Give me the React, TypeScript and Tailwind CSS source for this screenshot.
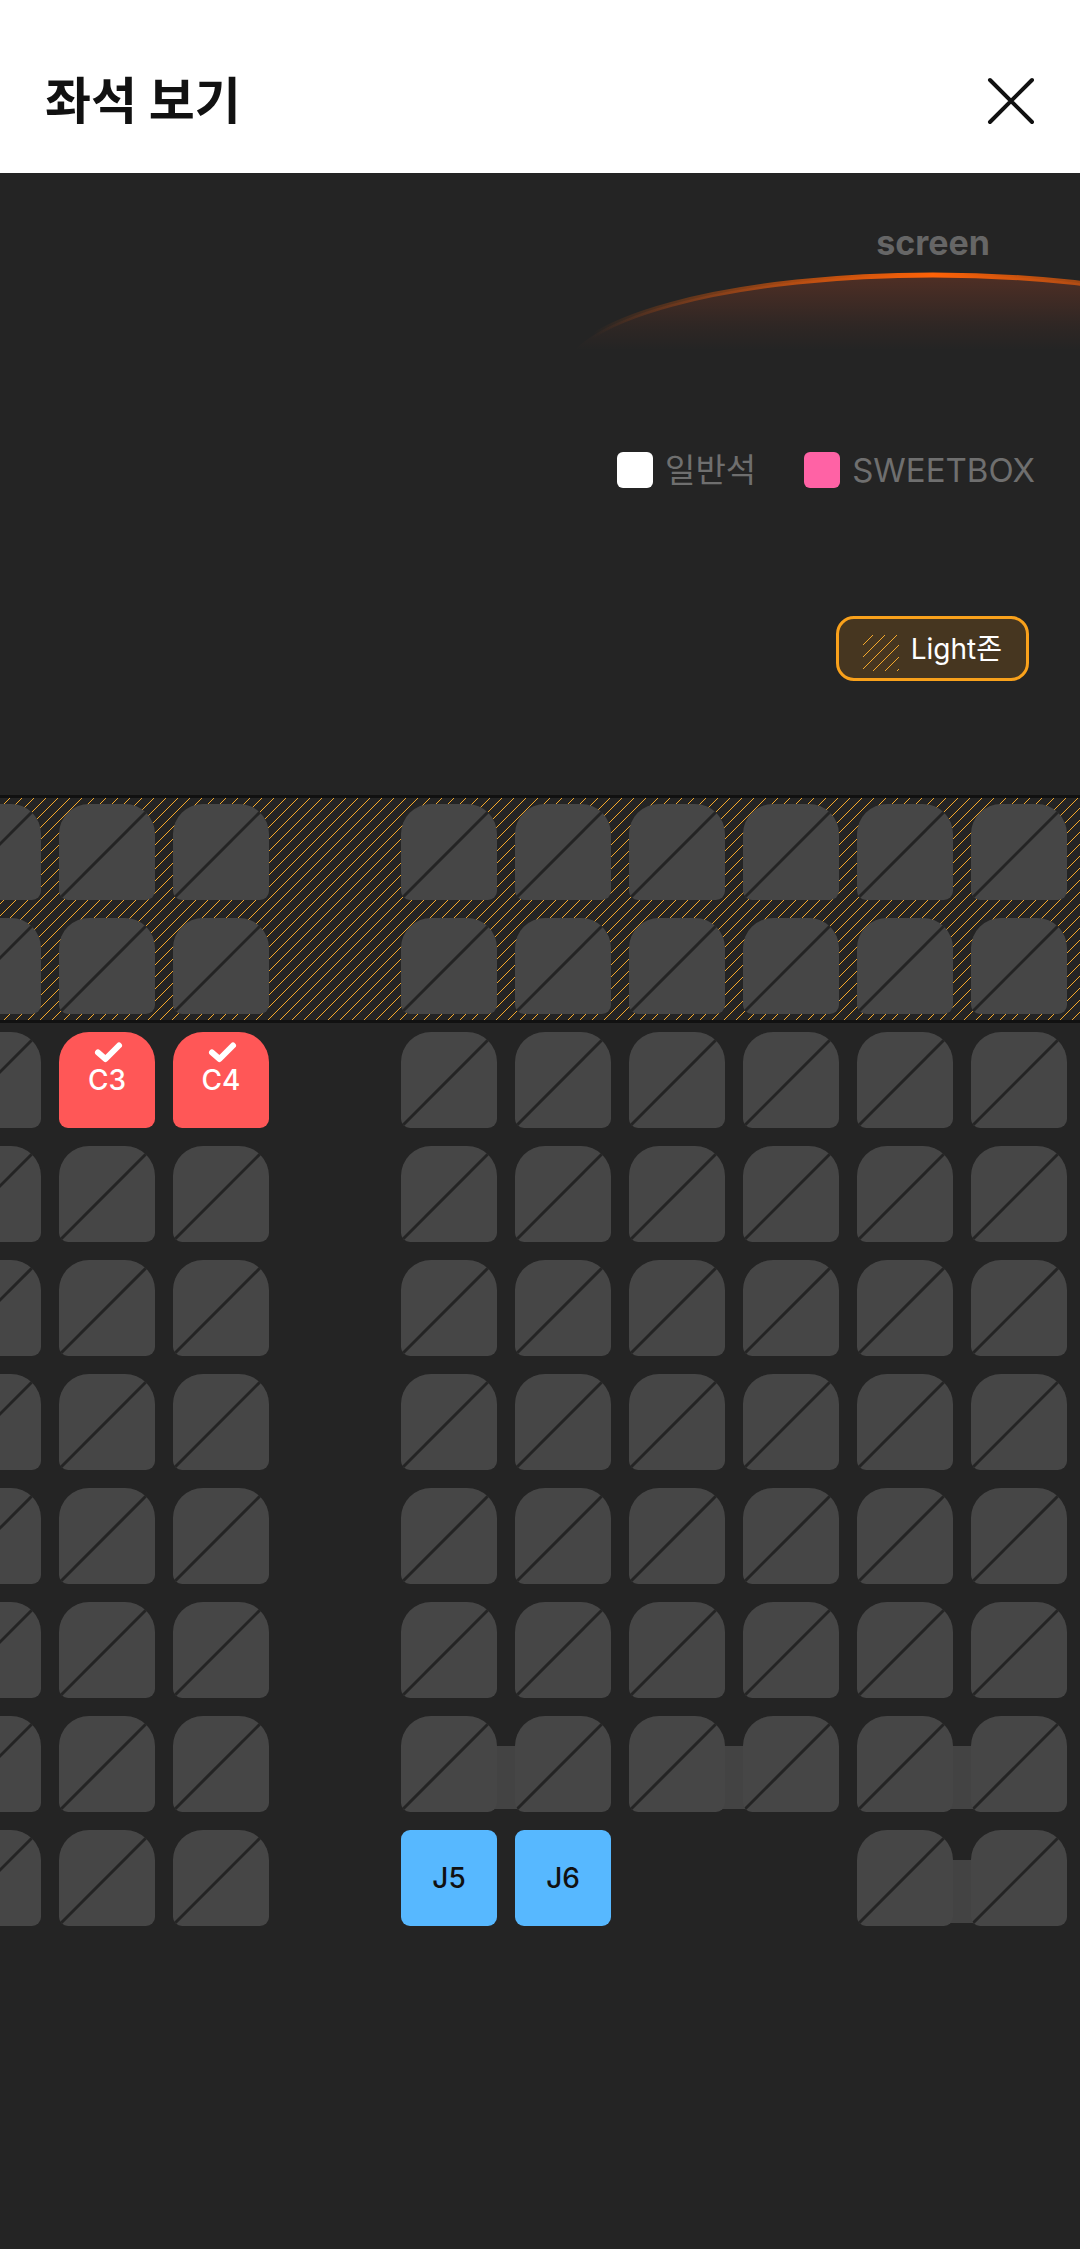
import { useState } from 'react';
import clsx from 'clsx';

type SeatType = 'sold' | 'picked' | 'open';

const ROWS = ['A', 'B', 'C', 'D', 'E', 'F', 'G', 'H', 'I', 'J'];
const LIGHT_ROWS = ROWS.slice(0, 2);
const OTHER_ROWS = ROWS.slice(2);

// 0 is the aisle
const COLUMNS = [2, 3, 4, 0, 5, 6, 7, 8, 9, 10];

const OPEN_SEATS = ['J5', 'J6'];
const MISSING_SEATS = ['J7', 'J8'];

// first seat of every sold pair
const SOLD_PAIRS = ['I5', 'I7', 'I9', 'J9'];

const LEGEND = [
    { label: '일반석', color: 'bg-white' },
    { label: 'SWEETBOX', color: 'bg-[#ff62a5]' },
];

function Hatch({ id, className }: { id: string; className?: string }) {
    return (
        <svg className={className} aria-hidden="true">
            <defs>
                <pattern id={id} width="12" height="12" patternUnits="userSpaceOnUse">
                    {Array.from({ length: 12 }, (_, y) => (
                        <rect key={y} x={(21 - y) % 12} y={y} width="1" height="1" fill="#f5a92c" />
                    ))}
                </pattern>
            </defs>
            <rect width="100%" height="100%" fill={`url(#${id})`} />
        </svg>
    );
}

function ScreenCurve() {
    return (
        <svg width="740" height="100" viewBox="0 0 740 100" className="block" aria-hidden="true">
            <defs>
                <linearGradient id="screen-line" x1="0" x2="740" y1="0" y2="0" gradientUnits="userSpaceOnUse">
                    <stop offset="0.04" stopColor="#ff6207" stopOpacity="0" />
                    <stop offset="0.5" stopColor="#ff6207" />
                    <stop offset="0.96" stopColor="#ff6207" stopOpacity="0" />
                </linearGradient>
                <linearGradient id="screen-glow" x1="0" x2="0" y1="14" y2="98" gradientUnits="userSpaceOnUse">
                    <stop offset="0" stopColor="#ff5a28" stopOpacity="0.2" />
                    <stop offset="0.6" stopColor="#ff5a28" stopOpacity="0.05" />
                    <stop offset="0.9" stopColor="#ff5a28" stopOpacity="0" />
                </linearGradient>
            </defs>
            <ellipse cx="370" cy="114" rx="370" ry="100" fill="url(#screen-glow)" />
            <ellipse cx="370" cy="114" rx="370" ry="100" fill="none" stroke="url(#screen-line)" strokeWidth="5" />
        </svg>
    );
}

function Seat({ name, picked, onToggle }: { name: string; picked: boolean; onToggle: (name: string) => void }) {
    const type: SeatType = picked ? 'picked' : OPEN_SEATS.includes(name) ? 'open' : 'sold';

    return (
        <button
            type="button"
            aria-label={name}
            disabled={type === 'sold'}
            onClick={() => onToggle(name)}
            className={clsx(
                'relative flex size-24 items-center justify-center overflow-hidden rounded-b-[9px] text-[28px] font-medium',
                type === 'sold' && 'rounded-t-[30px] bg-[#464646]',
                type === 'picked' && 'rounded-t-[30px] bg-[#ff5757] text-white',
                type === 'open' && 'rounded-t-[9px] bg-[#57b8ff] text-[#111]'
            )}
        >
            {type === 'sold' ? (
                <svg viewBox="0 0 96 96" className="size-full" aria-hidden="true">
                    <path d="M-2 97 97 -2" stroke="#242424" strokeWidth="3" />
                </svg>
            ) : (
                name
            )}
            {type === 'picked' && (
                <svg viewBox="0 0 96 96" fill="none" className="absolute inset-0 size-full" aria-hidden="true">
                    <path d="M39 20.5 46.5 27 60 13.5" stroke="#fff" strokeWidth="6" strokeLinecap="round" strokeLinejoin="round" />
                </svg>
            )}
        </button>
    );
}

export default function App() {
    const [picked, setPicked] = useState<string[]>(['C3', 'C4']);

    const toggle = (name: string) => {
        setPicked(prev => (prev.includes(name) ? prev.filter(n => n !== name) : [...prev, name]));
    };

    const renderRow = (row: string) => (
        <div key={row} className="-ml-16 flex">
            {COLUMNS.map((col) => {
                const name = `${row}${col}`;
                const empty = col === 0 || MISSING_SEATS.includes(name);
                return (
                    <div key={name} className="relative size-[114px] shrink-0 p-[9px]">
                        {SOLD_PAIRS.includes(name) && (
                            <span className="absolute top-[39px] left-24 h-[63px] w-9 bg-[#434343]" />
                        )}
                        {!empty && <Seat name={name} picked={picked.includes(name)} onToggle={toggle} />}
                    </div>
                );
            })}
        </div>
    );

    return (
        <div className="flex min-h-screen flex-col bg-[#242424] font-[Inter,'Noto_Sans_CJK_KR',sans-serif]">
            <header className="flex items-center justify-between bg-white px-[45px] pt-[65px] pb-9 text-[#111]">
                <h1 className="text-[50px] leading-[72px] font-bold">좌석 보기</h1>
                <button type="button" aria-label="닫기">
                    <svg width="48" height="48" viewBox="0 0 48 48" className="block">
                        <path d="M3 3 45 45M45 3 3 45" stroke="#111" strokeWidth="4" strokeLinecap="round" />
                    </svg>
                </button>
            </header>

            <main className="flex flex-col overflow-hidden">
                <div className="-mr-[223px] flex w-[740px] flex-col items-center self-end pt-[52px]">
                    <p className="text-[34px] leading-9 font-bold text-[#666]">screen</p>
                    <ScreenCurve />
                </div>

                <ul className="mt-[91px] flex justify-end gap-12 pr-[45px]">
                    {LEGEND.map((item) => (
                        <li key={item.label} className="flex items-center gap-3 text-[33px] leading-9 text-[#6f6f6f]">
                            <span className={clsx('size-9 rounded-md', item.color)} />
                            {item.label}
                        </li>
                    ))}
                </ul>

                <div className="mt-32 mr-[51px] flex items-end gap-3 self-end rounded-[18px] border-3 border-[#f9a11b] bg-[#463620] px-6 pt-2 pb-[7px] text-[28px] leading-11 text-white">
                    <Hatch id="hatch-chip" className="size-9" />
                    Light존
                </div>

                <section className="mt-[114px]">
                    <div className="relative">
                        <div className="absolute inset-0 border-y-3 border-[#111]">
                            <Hatch id="hatch-zone" className="size-full" />
                        </div>
                        {LIGHT_ROWS.map(renderRow)}
                    </div>
                    {OTHER_ROWS.map(renderRow)}
                </section>
            </main>
        </div>
    );
}
